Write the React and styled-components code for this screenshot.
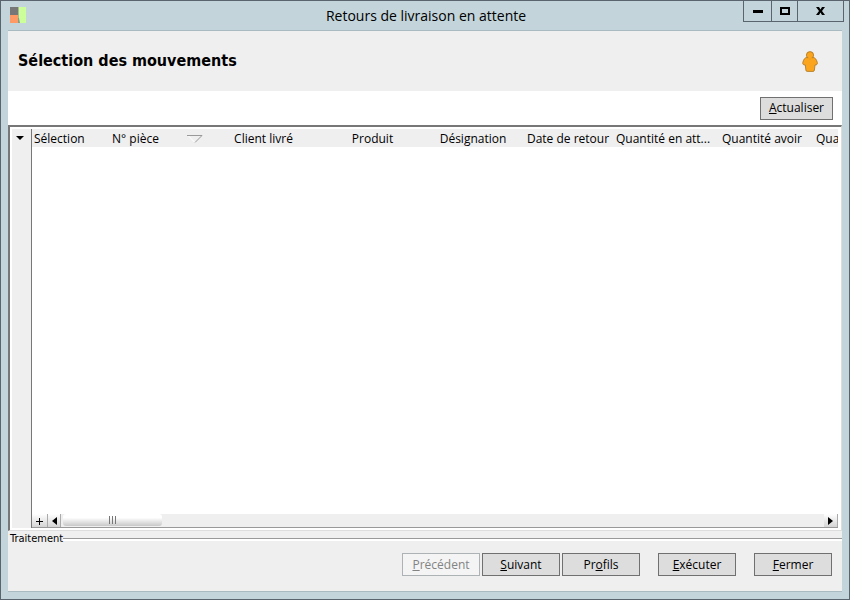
import React from "react";
import styled, { createGlobalStyle } from "styled-components";

const columns = [
  { label: "Sélection", width: 52, align: "left" },
  { label: "N° pièce", width: 124, sorted: true },
  { label: "Client livré", width: 111 },
  { label: "Produit", width: 107 },
  { label: "Désignation", width: 94 },
  { label: "Date de retour", width: 96 },
  { label: "Quantité en att...", width: 94 },
  { label: "Quantité avoir", width: 104 },
  { label: "Qua", width: 92, align: "left" },
];

export default function App() {
  return (
    <>
      <GlobalStyle />
      <Window>
        <TitleBar>
          <Logo />
          <WindowTitle>Retours de livraison en attente</WindowTitle>
          <WindowButtons>
            <WindowButton aria-label="Réduire">
              <svg width="10" height="3">
                <path d="M0 0h10v3H0z" fill="#000" />
              </svg>
            </WindowButton>
            <WindowButton aria-label="Agrandir" $width={26}>
              <svg width="10" height="8">
                <path d="M1 1h8v6H1z" fill="none" stroke="#000" strokeWidth="2" />
              </svg>
            </WindowButton>
            <WindowButton aria-label="Fermer la fenêtre" $width={46}>
              <svg width="9" height="8">
                <path
                  d="M0 0h3l1.5 2.4L6 0h3L6 4l3 4H6L4.5 5.6 3 8H0l3-4z"
                  fill="#000"
                />
              </svg>
            </WindowButton>
          </WindowButtons>
        </TitleBar>
        <Content>
          <Header>
            <Heading>Sélection des mouvements</Heading>
            <Person />
          </Header>
          <Toolbar>
            <Button $width={73}>
              <u>A</u>ctualiser
            </Button>
          </Toolbar>
          <Grid>
            <Gutter>
              <GutterButton aria-label="Options">
                <svg width="8" height="4">
                  <path d="M0 0h8L4 4z" fill="#000" />
                </svg>
              </GutterButton>
            </Gutter>
            <GridBody>
              <TableArea>
                <Table>
                  <colgroup>
                    {columns.map((column) => (
                      <Col key={column.label} $width={column.width} />
                    ))}
                  </colgroup>
                  <thead>
                    <tr>
                      {columns.map((column) => (
                        <Th key={column.label} $align={column.align}>
                          {column.sorted ? (
                            <SortedLabel>
                              <span>{column.label}</span>
                              <SortMark />
                            </SortedLabel>
                          ) : (
                            column.label
                          )}
                        </Th>
                      ))}
                    </tr>
                  </thead>
                  <tbody />
                </Table>
              </TableArea>
              <ScrollBar>
                <ScrollButton aria-label="Ajouter" $width={16}>
                  <svg width="7" height="7">
                    <path d="M3 0h1v3h3v1H4v3H3V4H0V3h3z" fill="#000" />
                  </svg>
                </ScrollButton>
                <ScrollButton aria-label="Défiler à gauche" $width={13}>
                  <svg width="5" height="8">
                    <path d="M5 0v8L0 4z" fill="#000" />
                  </svg>
                </ScrollButton>
                <Track>
                  <Thumb>
                    <svg width="8" height="8">
                      <path
                        d="M0.5 0v8M3.5 0v8M6.5 0v8"
                        stroke="#777"
                        fill="none"
                      />
                    </svg>
                  </Thumb>
                </Track>
                <ScrollButton aria-label="Défiler à droite" $width={14}>
                  <svg width="5" height="8">
                    <path d="M0 0v8l5-4z" fill="#000" />
                  </svg>
                </ScrollButton>
              </ScrollBar>
            </GridBody>
          </Grid>
          <Group>
            <Legend>Traitement</Legend>
          </Group>
          <Footer>
            <ButtonSet>
              <Button disabled>
                <u>P</u>récédent
              </Button>
              <Button>
                <u>S</u>uivant
              </Button>
              <Button>
                Pr<u>o</u>fils
              </Button>
            </ButtonSet>
            <Button>
              <u>E</u>xécuter
            </Button>
            <Button>
              <u>F</u>ermer
            </Button>
          </Footer>
        </Content>
      </Window>
    </>
  );
}

function Logo() {
  return (
    <svg width="17" height="17" aria-hidden="true">
      <path d="M0 0h8v8H0z" fill="#777" />
      <path d="M0 8h8v8H0z" fill="#ff9966" />
      <path d="M9 0h7v16H9z" fill="#ccff99" />
      <path d="M8 0h1v11H8z" fill="#aab89a" />
      <path d="M8 11h1l1 5H8z" fill="#8a9a8a" />
    </svg>
  );
}

function Person() {
  return (
    <svg width="16" height="21" viewBox="0 0 16 21" aria-hidden="true">
      <g fill="#fba51e" stroke="#a8741f" strokeWidth="0.8">
        <path d="M5 6.500h6c2 0 3.300 1.500 4.300 5 .4 1.600-.6 2.700-2.300 2.500l-.6 5.200c-.1.800-.6 1.200-1.300 1.200H5.200c-.8 0-1.200-.4-1.300-1.200L3.300 14C1.400 14.200.4 13.100.8 11.500 1.700 8 3 6.500 5 6.500z" />
        <circle cx="8" cy="4.200" r="3.600" />
      </g>
      <path d="M5.500 7.600h5" stroke="#fba51e" strokeWidth="1" />
    </svg>
  );
}

function SortMark() {
  return (
    <svg width="16" height="8" aria-hidden="true">
      <path d="M1 .5l7 7" stroke="#fff" fill="none" />
      <path d="M0 .5h15l-7 7" stroke="#999" fill="none" />
    </svg>
  );
}

const GlobalStyle = createGlobalStyle`
  * {
    box-sizing: border-box;
  }

  body {
    margin: 0;
    font-family: "Open Sans", "Noto Sans", sans-serif;
    font-size: 12px;
    color: #000;
  }

  svg {
    display: block;
    flex: none;
  }
`;

const Window = styled.div`
  display: flex;
  flex-direction: column;
  min-height: 100vh;
  padding: 0 7px 7px;
  border: 1px solid #59646e;
  background: #c3d5db;
`;

const TitleBar = styled.header`
  display: grid;
  grid-template-columns: 101px 1fr 101px;
  align-items: center;
  height: 29px;
  padding-left: 2px;
`;

const WindowTitle = styled.div`
  text-align: center;
  font-size: 14px;
  line-height: 20px;
`;

const WindowButtons = styled.div`
  display: flex;
  align-self: start;
  justify-content: flex-end;
  margin-right: -2px;
`;

const WindowButton = styled.button`
  display: flex;
  align-items: center;
  justify-content: center;
  flex: none;
  width: ${(props) => props.$width || 29}px;
  height: 21px;
  padding: 0;
  border: 1px solid #59646e;
  border-top: 0;
  background: transparent;

  & + & {
    border-left: 0;
  }
`;

const Content = styled.main`
  display: flex;
  flex-direction: column;
  flex: 1;
  border-top: 1px solid #a9bbc0;
  border-bottom: 1px solid #a9bbc0;
  background: #efefef;
`;

const Header = styled.div`
  display: flex;
  align-items: center;
  justify-content: space-between;
  height: 60px;
  padding: 0 24px 0 10px;
`;

const Heading = styled.h1`
  margin: 0;
  font-family: "DejaVu Sans Condensed", "DejaVu Sans", sans-serif;
  font-size: 16px;
  line-height: 20px;
  font-weight: bold;
`;

const Toolbar = styled.div`
  display: flex;
  align-items: center;
  justify-content: flex-end;
  height: 34px;
  padding-right: 9px;
  background: #fff;
`;

const Button = styled.button`
  width: ${(props) => props.$width || 78}px;
  height: 23px;
  padding: 0;
  border: 1px solid #707070;
  background: #ddd;
  color: #000;
  font: inherit;
  line-height: 20px;

  &:disabled {
    border-color: #adb2b5;
    background: #f4f4f4;
    color: #838383;
  }
`;

const Grid = styled.section`
  display: flex;
  flex: 1;
  min-height: 200px;
  padding: 2px 3px 2px 2px;
  border: 2px solid #777;
  border-right: 1px solid #ddd;
  border-bottom: 1px solid #ddd;
  background: #fff;
`;

const Gutter = styled.div`
  flex: none;
  width: 20px;
  border-right: 1px solid #777;
  background: #efefef;
`;

const GutterButton = styled.button`
  display: flex;
  align-items: center;
  justify-content: center;
  width: 100%;
  height: 18px;
  padding: 0 3px 0 0;
  border: 0;
  background: transparent;
`;

const GridBody = styled.div`
  display: flex;
  flex-direction: column;
  flex: 1;
  min-width: 0;
`;

const TableArea = styled.div`
  flex: 1;
  overflow: hidden;
  background: linear-gradient(#efefef 18px, #fff 18px);
`;

const Table = styled.table`
  width: 874px;
  table-layout: fixed;
  border-collapse: collapse;
`;

const Col = styled.col`
  width: ${(props) => props.$width}px;
`;

const Th = styled.th`
  height: 20px;
  padding: ${(props) => (props.$align ? "0 0 0 2px" : "0")};
  text-align: ${(props) => props.$align || "center"};
  font-weight: normal;
  line-height: 20px;
  white-space: nowrap;
`;

const SortedLabel = styled.div`
  display: grid;
  grid-template-columns: 1fr 21px;
  align-items: center;
`;

const ScrollBar = styled.div`
  display: flex;
  height: 14px;
  border-bottom: 1px solid #999;
  background: #efefef;
`;

const ScrollButton = styled.button`
  display: flex;
  align-items: center;
  justify-content: center;
  flex: none;
  width: ${(props) => props.$width}px;
  padding: 1px 0 0;
  border: 0;
  border-right: 1px solid #aaa;
  background: linear-gradient(#fff, #d4d4d4);
`;

const Track = styled.div`
  flex: 1;
  padding: 0 2px;
`;

const Thumb = styled.div`
  display: flex;
  align-items: center;
  justify-content: center;
  width: 99px;
  height: 12px;
  border-radius: 3px;
  background: linear-gradient(#fff 30%, #c8c8c8);
`;

const Group = styled.div`
  display: flex;
  align-items: center;
  height: 16px;
  padding-left: 2px;

  &::after {
    content: "";
    flex: 1;
    height: 2px;
    border-top: 1px solid #999;
    background: #fff;
  }
`;

const Legend = styled.span`
  font-family: "DejaVu Sans Condensed", "DejaVu Sans", sans-serif;
  font-size: 11px;
  line-height: 16px;
`;

const Footer = styled.footer`
  display: flex;
  justify-content: flex-end;
  gap: 18px;
  padding: 6px 10px 15px;
`;

const ButtonSet = styled.div`
  display: flex;
  gap: 2px;
`;
